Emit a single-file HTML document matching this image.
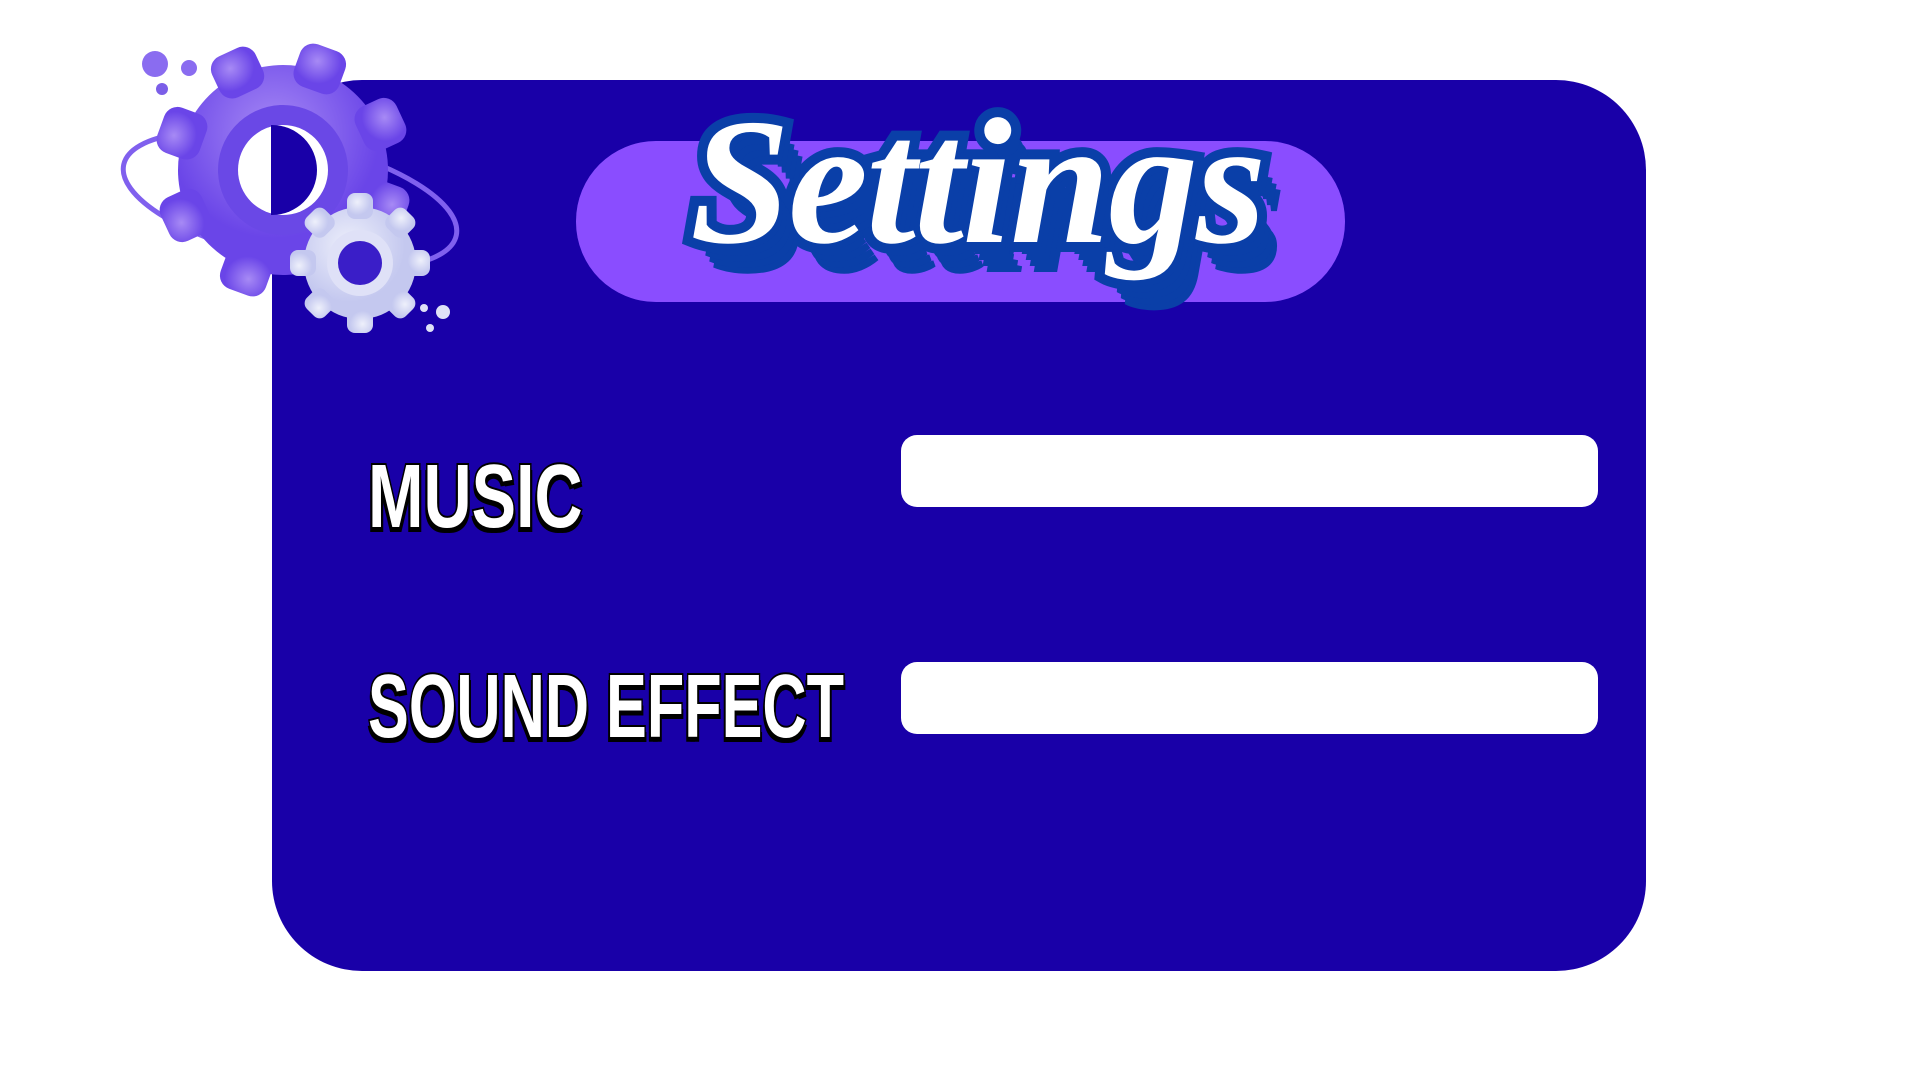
<!DOCTYPE html>
<html><head><style>
html,body{margin:0;padding:0;width:1920px;height:1080px;background:#fff;overflow:hidden;position:relative;font-family:"Liberation Sans",sans-serif}
.panel{position:absolute;left:272px;top:80px;width:1374px;height:891px;background:#1900a8;border-radius:90px}
.pill{position:absolute;left:576px;top:141px;width:769px;height:161px;background:#8a4dff;border-radius:80px}
.lbl{position:absolute;color:#fff;font-family:"Liberation Sans",sans-serif;font-weight:bold;font-size:90px;line-height:1;white-space:nowrap;transform-origin:0 0;
-webkit-text-stroke:4px #000;paint-order:stroke fill;text-shadow:-3px 5px 0 #000,3px 5px 0 #000}
.bar{position:absolute;left:901px;width:697px;height:72px;background:#fff;border-radius:16px}
.title{position:absolute;left:690px;top:92px;font-family:"Liberation Serif",serif;font-style:italic;font-weight:bold;font-size:180px;color:#fff;line-height:1;
-webkit-text-stroke:20px #0a3fa8;paint-order:stroke fill;text-shadow:4px 6px 0 #0a3fa8,8px 12px 0 #0a3fa8,12px 18px 0 #0a3fa8,16px 24px 0 #0a3fa8,20px 30px 0 #0a3fa8;letter-spacing:-2px}
</style></head><body>
<div class="panel"></div>
<div class="pill"></div>
<div class="title">Settings</div>
<div class="lbl" style="left:368px;top:452px;transform:scaleX(0.74)">MUSIC</div>
<div class="lbl" style="left:368px;top:662px;transform:scaleX(0.68)">SOUND EFFECT</div>
<div class="bar" style="top:435px"></div>
<div class="bar" style="top:662px"></div>
<svg style="position:absolute;left:0;top:0" width="600" height="400">
<defs>
<radialGradient id="g1" cx="40%" cy="35%"><stop offset="0" stop-color="#a78af5"/><stop offset="1" stop-color="#6a45e8"/></radialGradient>
<radialGradient id="g2" cx="40%" cy="35%"><stop offset="0" stop-color="#eef0fb"/><stop offset="1" stop-color="#c4c8ef"/></radialGradient>
<clipPath id="cr"><rect x="-1" y="-100" width="200" height="200"/></clipPath>
</defs>
<circle cx="155" cy="64" r="13" fill="#8a6cf0"/><circle cx="189" cy="68" r="8" fill="#8a6cf0"/><circle cx="162" cy="89" r="6" fill="#7b5ee8"/>
<ellipse cx="290" cy="200" rx="170" ry="60" transform="rotate(12 290 200)" fill="none" stroke="#8060ee" stroke-width="5"/>
<g transform="translate(283,170) rotate(20)">
<g fill="url(#g1)">
<circle r="105"/>
<g id="t"><rect x="-24" y="-130" width="48" height="45" rx="14"/></g>
<use href="#t" transform="rotate(45)"/><use href="#t" transform="rotate(90)"/><use href="#t" transform="rotate(135)"/><use href="#t" transform="rotate(180)"/><use href="#t" transform="rotate(225)"/><use href="#t" transform="rotate(270)"/><use href="#t" transform="rotate(315)"/>
</g>
<circle r="65" fill="#6a48e6"/>
</g>
<g transform="translate(283,170)">
<circle r="45" fill="#fff"/>
<circle r="45" fill="#1900a8" clip-path="url(#cr)" transform="translate(-11,0)"/>
</g>
<g transform="translate(360,263)">
<g fill="url(#g2)">
<circle r="56"/>
<g id="t2"><rect x="-13" y="-70" width="26" height="26" rx="8"/></g>
<use href="#t2" transform="rotate(45)"/><use href="#t2" transform="rotate(90)"/><use href="#t2" transform="rotate(135)"/><use href="#t2" transform="rotate(180)"/><use href="#t2" transform="rotate(225)"/><use href="#t2" transform="rotate(270)"/><use href="#t2" transform="rotate(315)"/>
</g>
<circle r="33" fill="#dfe1f7"/><circle r="22" fill="#3a1ec8"/>
</g>
<circle cx="443" cy="312" r="7" fill="#dfe1f7"/><circle cx="424" cy="308" r="4" fill="#dfe1f7"/><circle cx="430" cy="328" r="4" fill="#dfe1f7"/>
</svg>
</body></html>
